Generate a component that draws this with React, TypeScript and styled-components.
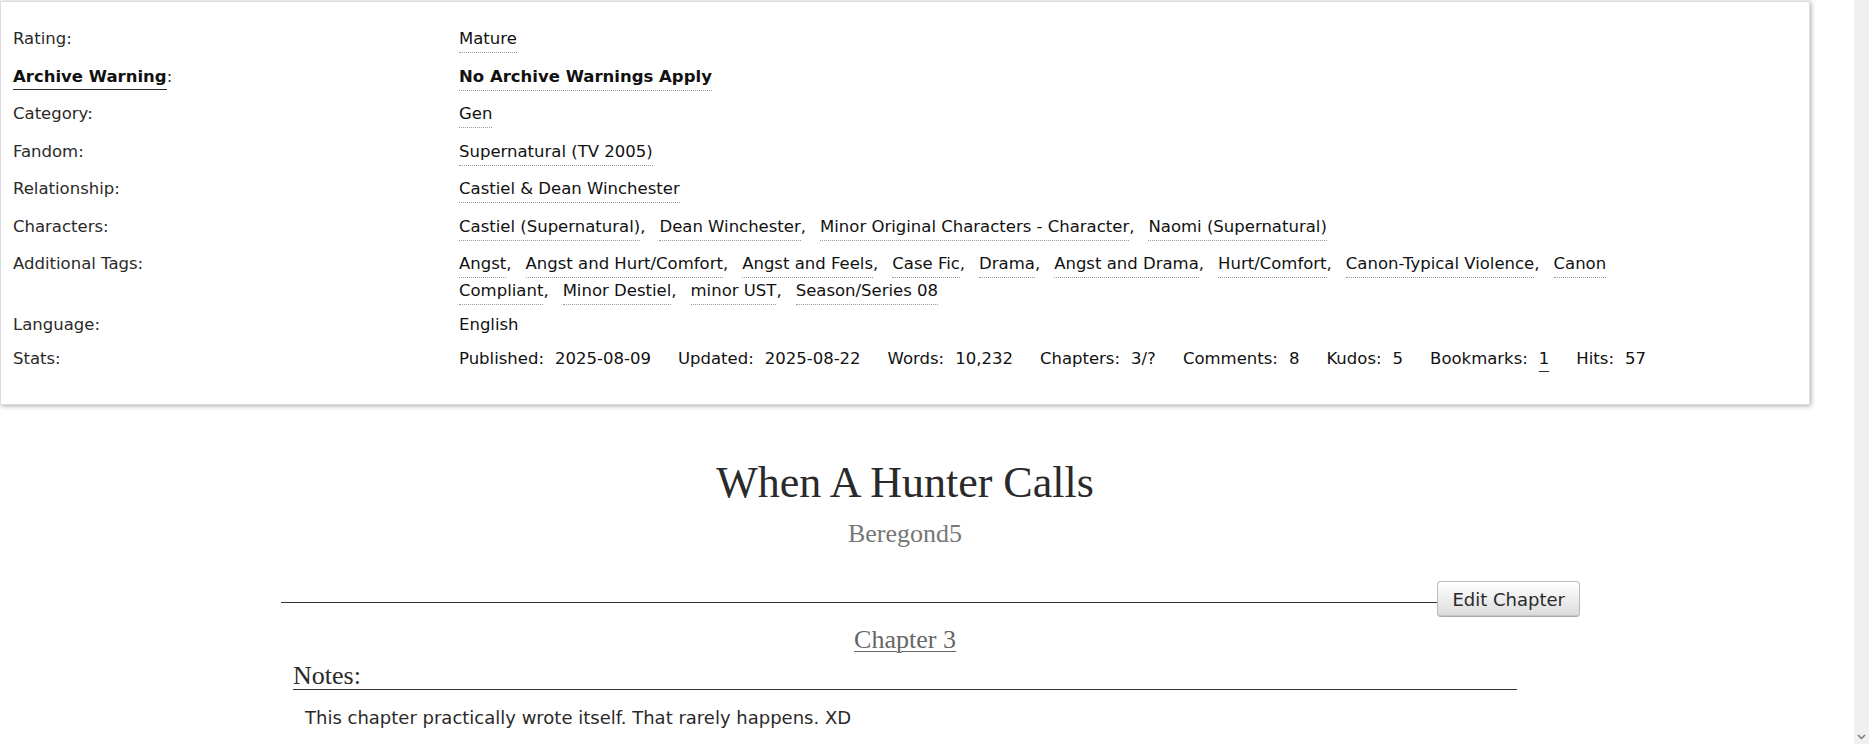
import React from "react";
import styled, { createGlobalStyle } from "styled-components";

const GlobalStyle = createGlobalStyle`
  html, body {
    margin: 0;
    padding: 0;
    background: #fff;
    overflow: hidden;
  }
  body {
    font-family: "DejaVu Sans", "Lucida Grande", Verdana, sans-serif;
    color: #2a2a2a;
  }
`;

const sans = `"DejaVu Sans", "Lucida Grande", Verdana, sans-serif`;
const serif = `"Liberation Serif", Georgia, serif`;

const meta = [
  { label: "Rating", tags: ["Mature"] },
  { label: "Archive Warning", tags: ["No Archive Warnings Apply"], strong: true },
  { label: "Category", tags: ["Gen"] },
  { label: "Fandom", tags: ["Supernatural (TV 2005)"] },
  { label: "Relationship", tags: ["Castiel & Dean Winchester"] },
  {
    label: "Characters",
    tags: [
      "Castiel (Supernatural)",
      "Dean Winchester",
      "Minor Original Characters - Character",
      "Naomi (Supernatural)",
    ],
  },
  {
    label: "Additional Tags",
    gap: 7,
    tags: [
      "Angst",
      "Angst and Hurt/Comfort",
      "Angst and Feels",
      "Case Fic",
      "Drama",
      "Angst and Drama",
      "Hurt/Comfort",
      "Canon-Typical Violence",
      "Canon Compliant",
      "Minor Destiel",
      "minor UST",
      "Season/Series 08",
    ],
  },
];

const stats = [
  ["Published", "2025-08-09"],
  ["Updated", "2025-08-22"],
  ["Words", "10,232"],
  ["Chapters", "3/?"],
  ["Comments", "8"],
  ["Kudos", "5"],
  ["Bookmarks", "1"],
  ["Hits", "57"],
];

const App = () => {
  return (
    <>
      <GlobalStyle />
      <Page>
        <Main>
          <MetaBox>
            {meta.map((row) => (
              <React.Fragment key={row.label}>
                <Dt>
                  {row.strong ? <WarningLabel>{row.label}</WarningLabel> : row.label}:
                </Dt>
                <Dd $gap={row.gap}>
                  <TagList>
                    {row.tags.map((t) => (
                      <TagItem key={t}>
                        <Tag $strong={row.strong}>{t}</Tag>
                      </TagItem>
                    ))}
                  </TagList>
                </Dd>
              </React.Fragment>
            ))}
            <Dt>Language:</Dt>
            <Dd $gap={7}>English</Dd>
            <Dt>Stats:</Dt>
            <Dd $gap={0}>
              <StatsList>
                {stats.map(([k, v]) => (
                  <React.Fragment key={k}>
                    <StatKey>{k}:</StatKey>
                    <StatValue>{k === "Bookmarks" ? <StatLink>{v}</StatLink> : v}</StatValue>
                  </React.Fragment>
                ))}
              </StatsList>
            </Dd>
          </MetaBox>

          <Work>
            <Title>When A Hunter Calls</Title>
            <Byline>Beregond5</Byline>
            <ChapterHeader>
              <Rule />
              <EditButton>Edit Chapter</EditButton>
            </ChapterHeader>
            <ChapterTitle>Chapter 3</ChapterTitle>
            <Notes>
              <NotesHeading>Notes:</NotesHeading>
              <NotesText>This chapter practically wrote itself. That rarely happens. XD</NotesText>
            </Notes>
          </Work>
        </Main>
        <Scrollbar>
          <svg width="9" height="6" viewBox="0 0 9 6">
            <path d="M1 1 L4.5 4.5 L8 1" fill="none" stroke="#777" strokeWidth="1.4" />
          </svg>
        </Scrollbar>
      </Page>
    </>
  );
};

const Page = styled.div`
  display: flex;
  height: 744px;
  overflow: hidden;
`;

const Main = styled.main`
  flex: 1;
  min-width: 0;
`;

const MetaBox = styled.dl`
  display: grid;
  grid-template-columns: 446px 1fr;
  margin: 1px 44px 0 0;
  padding: 23px 110px 32px 12px;
  border: 1px solid #ddd;
  box-shadow: 1px 1px 5px #aaa;
  background: #fff;
  font-family: ${sans};
  font-size: 16.5px;
  line-height: 27px;
`;

const Dt = styled.dt`
  margin: 0;
  color: #2a2a2a;
`;

const WarningLabel = styled.span`
  font-weight: bold;
  color: #111;
  border-bottom: 1px solid #2a2a2a;
  padding-bottom: 3px;
`;

const Dd = styled.dd<{ $gap?: number }>`
  margin: 0 0 ${(p) => (p.$gap ?? 10.5)}px;
  color: #111;
`;

const TagList = styled.ul`
  display: inline;
  margin: 0;
  padding: 0;
  list-style: none;
`;

const TagItem = styled.li`
  display: inline;
  &:not(:last-child)::after {
    content: ",";
    margin-right: 14px;
  }
`;

const Tag = styled.a<{ $strong?: boolean }>`
  color: #111;
  font-weight: ${(p) => (p.$strong ? "bold" : "normal")};
  text-decoration: none;
  border-bottom: 1px dotted #999;
  padding-bottom: 4px;
`;

const StatsList = styled.dl`
  display: flex;
  margin: 0;
`;

const StatKey = styled.dt`
  margin: 0 11px 0 0;
`;

const StatValue = styled.dd`
  margin: 0 27px 0 0;
`;

const StatLink = styled.a`
  border-bottom: 1px solid #2a2a2a;
  padding-bottom: 3px;
`;

const Work = styled.section`
  margin: 56px 325px 0 281px;
`;

const Title = styled.h2`
  margin: 0;
  font-family: ${serif};
  font-size: 44px;
  line-height: 43px;
  font-weight: normal;
  text-align: center;
  color: #2a2a2a;
`;

const Byline = styled.h3`
  margin: 17px 0 0;
  font-family: ${serif};
  font-size: 26px;
  line-height: 26px;
  font-weight: normal;
  text-align: center;
  color: #777;
`;

const ChapterHeader = styled.div`
  display: flex;
  align-items: flex-start;
  margin: 34px -51px 0 0;
`;

const Rule = styled.div`
  flex: 1;
  height: 21px;
  border-bottom: 1px solid #333;
`;

const EditButton = styled.button`
  height: 36px;
  padding: 0 14px;
  font-family: ${sans};
  font-size: 18px;
  color: #2a2a2a;
  background: linear-gradient(#fff 2%, #ddd 95%, #bbb 100%);
  border: 1px solid #bbb;
  border-bottom-color: #aaa;
  border-radius: 4px;
`;

const ChapterTitle = styled.h3`
  margin: 10px 0 0;
  font-family: ${serif};
  font-size: 26px;
  line-height: 26px;
  font-weight: normal;
  text-align: center;
  color: #666;
  text-decoration: underline;
  text-decoration-thickness: 1px;
  text-underline-offset: 3px;
`;

const Notes = styled.div`
  margin: 10px 12px 0;
`;

const NotesHeading = styled.h3`
  margin: 0;
  font-family: ${serif};
  font-size: 26px;
  line-height: 26px;
  font-weight: normal;
  color: #2a2a2a;
  border-bottom: 1px solid #333;
`;

const NotesText = styled.p`
  margin: 15px 0 0 12px;
  font-family: ${sans};
  font-size: 18px;
  line-height: 26px;
  color: #2a2a2a;
`;

const Scrollbar = styled.div`
  width: 15px;
  flex-shrink: 0;
  background: #f0f0f0;
  display: flex;
  flex-direction: column;
  justify-content: flex-end;
  align-items: center;
  padding-bottom: 4px;
  box-sizing: border-box;
`;

export default App;
